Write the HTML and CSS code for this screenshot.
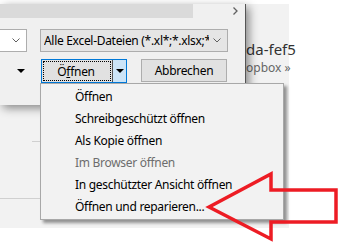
FILE: index.html
```html
<!DOCTYPE html>
<html lang="de">
<head>
    <meta charset="UTF-8">
    <meta name="viewport" content="width=device-width, initial-scale=1.0">
    <title>Öffnen</title>
    <link rel="stylesheet" href="styles.css">
</head>
<body>
    <div class="desk">
        <div class="backdrop">
            <div class="bg-title">da-fef5</div>
            <div class="bg-sub">opbox »</div>
            <div class="bg-line short"></div>
            <div class="bg-line long"></div>
        </div>

        <div class="dialog">
            <div class="hscroll">
                <div class="thumb"></div>
                <svg class="scroll-arrow" width="5" height="8" viewBox="0 0 5 8"><path d="M0.5 0.5 L4 4 L0.5 7.5" fill="none" stroke="#606060" stroke-width="1.3"/></svg>
            </div>
            <div class="row">
                <div class="combo name">
                    <svg class="chev" width="8" height="5" viewBox="0 0 8 5"><path d="M0.5 0.5 L4 4 L7.5 0.5" fill="none" stroke="#606060" stroke-width="1"/></svg>
                </div>
                <div class="combo type">
                    <span class="combo-text">Alle Excel-Dateien (*.xl*;*.xlsx;*</span>
                    <svg class="chev" width="8" height="5" viewBox="0 0 8 5"><path d="M0.5 0.5 L4 4 L7.5 0.5" fill="none" stroke="#606060" stroke-width="1"/></svg>
                </div>
            </div>
            <div class="row buttons">
                <div class="tools"><span class="tri"></span></div>
                <div class="split">
                    <div class="split-main"><span class="focus">Ö<u>f</u>fnen</span></div>
                    <div class="split-drop"><span class="tri"></span></div>
                </div>
                <button class="btn">Abbrechen</button>
            </div>
        </div>

        <ul class="menu">
            <li>Öffnen</li>
            <li>Schreibgeschützt öffnen</li>
            <li>Als Kopie öffnen</li>
            <li class="disabled">Im Browser öffnen</li>
            <li>In geschützter Ansicht öffnen</li>
            <li>Öffnen und reparieren...</li>
        </ul>

        <svg class="callout" width="342" height="242" viewBox="0 0 342 242">
            <polygon points="209,207 271,174 271,190 336,190 336,222 271,222 271,239" fill="none" stroke="#ed1c24" stroke-width="3.5" stroke-linejoin="miter"/>
        </svg>
    </div>
</body>
</html>
```

FILE: styles.css
```css
body {
    margin: 0;
    background: #fff;
    font-family: "Noto Sans", sans-serif;
    font-size: 12px;
    letter-spacing: -0.3px;
    color: #000;
}
.desk {
    position: relative;
    width: 342px;
    height: 242px;
    overflow: hidden;
}
.backdrop {
    margin-top: 4px;
    width: 289px;
    height: 224px;
    background: #f2f2f2;
    display: flex;
    flex-direction: column;
}
.bg-title {
    padding-left: 246px;
    margin-top: 36px;
    font-size: 15px;
    line-height: 18px;
    letter-spacing: 0;
    color: #333;
    white-space: nowrap;
}
.bg-sub {
    padding-left: 246px;
    margin-top: 2px;
    line-height: 16px;
    letter-spacing: 0;
    color: #666;
    white-space: nowrap;
}
.bg-line {
    height: 1px;
    background: #d0d0d0;
}
.bg-line.short {
    margin-top: 65px;
    margin-left: 32px;
    width: 8px;
}
.bg-line.long {
    margin-top: 56px;
    width: 40px;
}

/* file dialog */
.dialog {
    position: absolute;
    left: 0;
    top: 4px;
    width: 245px;
    height: 101px;
    background: #f0f0f0;
    border-right: 1px solid #555;
    box-shadow: 3px 3px 9px rgba(0, 0, 0, 0.45);
}
.hscroll {
    height: 14px;
    display: flex;
    align-items: center;
}
.thumb {
    width: 193px;
    height: 14px;
    background: #dadada;
}
.scroll-arrow {
    margin-left: auto;
    margin-right: 7px;
}
.row {
    display: flex;
    margin-top: 11px;
    height: 23px;
    gap: 13px;
}
.combo {
    box-sizing: border-box;
    height: 23px;
    border: 1px solid #adadad;
    display: flex;
    align-items: center;
}
.combo.name {
    width: 27px;
    border-left: none;
    background: #fff;
    justify-content: flex-end;
    padding-right: 6px;
}
.combo.type {
    width: 188px;
    background: #e5e5e5;
    padding: 0 6px 0 3px;
}
.combo-text {
    flex: 1;
    overflow: hidden;
    white-space: nowrap;
}
.combo.type .chev {
    margin-left: 4px;
}
.buttons {
    margin-top: 7px;
    height: 24px;
    gap: 0;
}
.tools {
    width: 41px;
    display: flex;
    align-items: center;
    justify-content: flex-end;
    padding-right: 16px;
    box-sizing: border-box;
}
.tri {
    width: 0;
    height: 0;
    border-left: 4px solid transparent;
    border-right: 4px solid transparent;
    border-top: 4px solid #000;
}
.split {
    box-sizing: border-box;
    width: 86px;
    height: 24px;
    border: 1px solid #0078d7;
    display: flex;
}
.split-main {
    width: 71px;
    background: #e1e1e1;
    padding: 1px;
    box-sizing: border-box;
    border-right: 1px solid #555;
}
.focus {
    box-sizing: border-box;
    height: 100%;
    border: 1px dotted #000;
    display: flex;
    align-items: center;
    justify-content: center;
    padding-right: 2px;
}
.split-drop {
    flex: 1;
    background: #cce4f7;
    display: flex;
    align-items: center;
    justify-content: center;
}
.btn {
    box-sizing: border-box;
    margin-left: 14px;
    width: 86px;
    height: 23px;
    padding: 0;
    border: 1px solid #adadad;
    border-radius: 0;
    background: #e1e1e1;
    font: inherit;
    letter-spacing: inherit;
    color: #000;
}

/* dropdown menu */
.menu {
    position: absolute;
    left: 40px;
    top: 83px;
    width: 244px;
    height: 137px;
    box-sizing: border-box;
    margin: 0;
    padding: 2px 0 0;
    list-style: none;
    background: #f2f2f2;
    border: 1px solid #a8a8a8;
    box-shadow: 3px 3px 3px rgba(0, 0, 0, 0.4);
}
.menu li {
    height: 22px;
    line-height: 22px;
    padding-left: 34px;
    white-space: nowrap;
}
.menu li.disabled {
    color: #6d6d6d;
}
.callout {
    position: absolute;
    left: 0;
    top: 0;
    pointer-events: none;
}
```
